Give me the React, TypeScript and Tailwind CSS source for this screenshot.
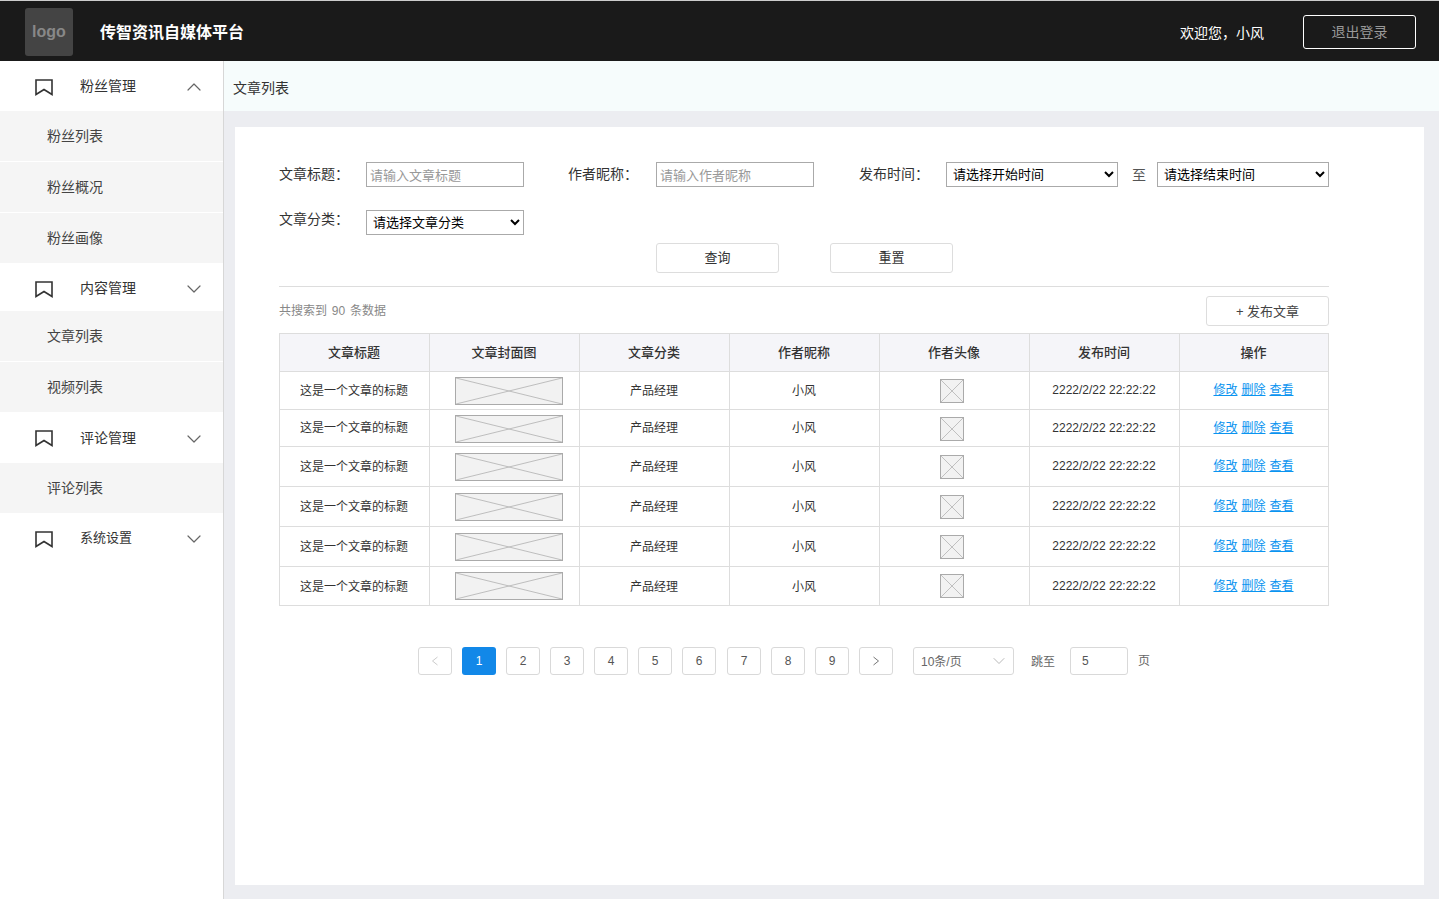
import React from 'react';
import { ChevronDown, ChevronUp } from 'lucide-react';

const FONT = 'font-["Liberation_Sans","Noto_Sans_CJK_SC",sans-serif]';

const menu = [
  { name: '粉丝管理', height: 'h-[50px] pt-[2px]', open: true, small: false, children: [
    { name: '粉丝列表', height: 'h-[50px]' },
    { name: '粉丝概况', height: 'h-[50px]' },
    { name: '粉丝画像', height: 'h-[50px]' },
  ] },
  { name: '内容管理', height: 'h-[48px] pt-[4px]', open: false, small: false, children: [
    { name: '文章列表', height: 'h-[50px]' },
    { name: '视频列表', height: 'h-[50px]' },
  ] },
  { name: '评论管理', height: 'h-[51px] pt-[2px]', open: false, small: false, children: [
    { name: '评论列表', height: 'h-[50px]' },
  ] },
  { name: '系统设置', height: 'h-[50px] pt-[2px]', open: false, small: true, children: [] },
];

const columns = ['文章标题', '文章封面图', '文章分类', '作者昵称', '作者头像', '发布时间', '操作'];
const rows = [
  { height: 'h-[38px]', nudge: 'pb-[2px]', image: '', title: '' },
  { height: 'h-[37px]', nudge: '', image: 'pt-[2px]', title: '' },
  { height: 'h-[40px]', nudge: 'pb-[2px]', image: '', title: '' },
  { height: 'h-[40px]', nudge: 'pb-[2px]', image: '', title: '' },
  { height: 'h-[40px]', nudge: 'pb-[2px]', image: '', title: '' },
  { height: 'h-[39px]', nudge: '', image: '', title: 'pt-[2px]' },
];
const pages = [
  { label: '2', cls: 'ml-[10px]' },
  { label: '3', cls: 'ml-[10px]' },
  { label: '4', cls: 'ml-[10px]' },
  { label: '5', cls: 'ml-[10px]' },
  { label: '6', cls: 'ml-[10px]' },
  { label: '7', cls: 'ml-[11px]' },
  { label: '8', cls: 'ml-[10px]' },
  { label: '9', cls: 'ml-[10px]' },
];

function BookmarkIcon() {
  return (
    <svg width="18" height="17" viewBox="0 0 18 17" fill="none" stroke="#333" strokeWidth="1.6">
      <path d="M1 1 H17 V15.5 L9 10.5 L1 15.5 Z" />
    </svg>
  );
}

function PageArrow({ d, color }: { d: string; color: string }) {
  return (
    <svg width="8" height="10" viewBox="0 0 8 10" fill="none" stroke={color} strokeWidth="1">
      <path d={d} />
    </svg>
  );
}

function Placeholder({ width, height }: { width: number; height: number }) {
  return (
    <svg width={width} height={height} className="block bg-[#f2f2f2] border border-[#aaa]" preserveAspectRatio="none" viewBox={`0 0 ${width} ${height}`}>
      <path d={`M0 0 L${width} ${height} M${width} 0 L0 ${height}`} stroke="#bbb" strokeWidth="1" fill="none" />
    </svg>
  );
}

function Sidebar() {
  return (
    <aside className="w-[224px] shrink-0 bg-white border-r border-[#d7d7d7]">
      {menu.map((group) => (
        <div key={group.name}>
          <div className={`${group.height} flex items-center`}>
            <div className="ml-[35px] w-[45px]"><BookmarkIcon /></div>
            <span className={`${group.small ? 'text-[13px]' : 'text-sm'} flex-1 text-[#333] -mt-[2px]`}>{group.name}</span>
            {group.open
              ? <ChevronUp className="mr-[17px] text-[#666]" size={24} strokeWidth={1.2} />
              : <ChevronDown className="mr-[17px] text-[#666]" size={24} strokeWidth={1.2} />}
          </div>
          {group.children.map((child) => (
            <div key={child.name} className={`${child.height} flex items-center pl-[47px] text-sm text-[#444] bg-[#f5f5f5] [&:not(:last-child)]:border-b [&:not(:last-child)]:border-white [&:not(:last-child)]:h-[51px]`}>
              {child.name}
            </div>
          ))}
        </div>
      ))}
    </aside>
  );
}

function Filters() {
  const label = 'w-[87px] text-sm text-[#333] -mt-[2px]';
  const field = 'border border-[#aaa] bg-white h-[25px] text-[13px]';
  return (
    <div className="text-[#333]">
      <div className="flex items-center h-[25px]">
        <span className={label}>文章标题：</span>
        <input className={`${field} w-[158px] px-[3px] pt-[2px] placeholder-[#999]`} placeholder="请输入文章标题" />
        <span className={`${label} ml-[44px] w-[88px]`}>作者昵称：</span>
        <input className={`${field} w-[158px] px-[3px] pt-[2px] placeholder-[#999]`} placeholder="请输入作者昵称" />
        <span className={`${label} ml-[45px]`}>发布时间：</span>
        <select className={`${field} w-[172px] px-[2px] text-black`} defaultValue="a">
          <option value="a">请选择开始时间</option>
        </select>
        <span className="ml-[14px] w-[25px] text-sm text-[#555]">至</span>
        <select className={`${field} w-[172px] px-[2px] text-black`} defaultValue="b">
          <option value="b">请选择结束时间</option>
        </select>
      </div>
      <div className="flex items-center h-[25px] mt-[23px]">
        <span className="w-[87px] text-sm text-[#333] -mt-[8px]">文章分类：</span>
        <select className={`${field} w-[158px] px-[2px] text-black`} defaultValue="c">
          <option value="c">请选择文章分类</option>
        </select>
      </div>
      <div className="flex mt-[8px] pl-[377px]">
        <button className="w-[123px] h-[30px] border border-[#ddd] rounded-[3px] text-[13px] text-[#333] bg-white">查询</button>
        <button className="ml-[51px] w-[123px] h-[30px] border border-[#ddd] rounded-[3px] text-[13px] text-[#333] bg-white">重置</button>
      </div>
    </div>
  );
}

function ArticleTable() {
  const cell = 'border border-[#ddd] text-center p-0';
  const text = `${cell} pr-[1px]`;
  const media = `${cell} pr-[2px]`;
  return (
    <table className="w-[1050px] table-fixed border-collapse">
      <colgroup>
        <col className="w-[150px]" />
        <col className="w-[150px]" />
        <col className="w-[150px]" />
        <col className="w-[150px]" />
        <col className="w-[150px]" />
        <col className="w-[150px]" />
        <col />
      </colgroup>
      <thead>
        <tr className="h-[38px] bg-[#f5f5f9]">
          {columns.map((c) => (
            <th key={c} className={`${text} text-[13px] font-medium text-[#333]`}>{c}</th>
          ))}
        </tr>
      </thead>
      <tbody className="text-xs text-[#333]">
        {rows.map((row, i) => (
          <tr key={i} className={row.height}>
            <td className={`${text} ${row.title}`}>这是一个文章的标题</td>
            <td className={`${media} ${row.image}`}>
              <div className="flex justify-center pl-[10px]"><Placeholder width={108} height={28} /></div>
            </td>
            <td className={`${text} ${row.title}`}>产品经理</td>
            <td className={`${text} ${row.title}`}>小风</td>
            <td className={`${media} ${row.image}`}>
              <div className="flex justify-center pr-[4px]"><Placeholder width={24} height={24} /></div>
            </td>
            <td className={`${text} ${row.nudge}`}>2222/2/22 22:22:22</td>
            <td className={`${text} ${row.nudge}`}>
              <span className="text-[#0a94f0] underline">修改</span>
              <span className="text-[#0a94f0] underline ml-[4px]">删除</span>
              <span className="text-[#0a94f0] underline ml-[4px]">查看</span>
            </td>
          </tr>
        ))}
      </tbody>
    </table>
  );
}

function Pagination() {
  const box = 'w-[34px] h-[28px] border border-[#d9d9d9] rounded-[3px] bg-white flex items-center justify-center text-xs text-[#555]';
  return (
    <div className="flex items-center mt-[41px] pl-[139px] h-[28px]">
      <div className={box}><PageArrow d="M6.5 1 L1.5 5 L6.5 9" color="#ccc" /></div>
      <div className="w-[34px] h-[28px] ml-[10px] rounded-[3px] bg-[#1288e8] flex items-center justify-center text-xs text-white">1</div>
      {pages.map((p) => (
        <div key={p.label} className={`${box} ${p.cls}`}>{p.label}</div>
      ))}
      <div className={`${box} ml-[10px]`}><PageArrow d="M1.5 1 L6.5 5 L1.5 9" color="#777" /></div>
      <div className="ml-[20px] w-[101px] h-[28px] border border-[#d9d9d9] rounded-[3px] flex items-center justify-between pl-[7px] pr-[4px] text-xs text-[#666]">
        <span className="mt-[2px]">10条/页</span>
        <ChevronDown size={20} className="text-[#aaa]" strokeWidth={1} />
      </div>
      <span className="ml-[17px] mt-[2px] text-xs text-[#666]">跳至</span>
      <div className="ml-[15px] w-[58px] h-[28px] border border-[#d9d9d9] rounded-[3px] flex items-center pl-[11px] text-xs text-[#555]">5</div>
      <span className="ml-[10px] text-xs text-[#666]">页</span>
    </div>
  );
}

export default function App() {
  return (
    <div className={`${FONT} h-[899px] w-[1439px] flex flex-col overflow-hidden`}>
      <header className="h-[61px] shrink-0 bg-[#1a1a1a] border-t border-[#ccc] pt-[2px] flex items-center">
        <div className="ml-[25px] w-[48px] h-[48px] rounded-[3px] bg-[#444] flex items-center justify-center text-base font-bold text-[#888]">logo</div>
        <h1 className="ml-[27px] mt-[2px] text-base font-bold text-white">传智资讯自媒体平台</h1>
        <span className="ml-auto text-sm text-white mt-[2px]">欢迎您，小风</span>
        <button className="ml-[39px] mr-[23px] w-[113px] h-[34px] border border-white rounded-[3px] text-sm text-[#999]">退出登录</button>
      </header>
      <div className="flex flex-1 min-h-0">
        <Sidebar />
        <main className="flex-1 flex flex-col bg-[#ecedf1] min-w-0">
          <div className="h-[50px] shrink-0 bg-[#f6fcfc] flex items-center pl-[9px] pt-[4px] text-sm text-[#333]">文章列表</div>
          <div className="mt-[16px] ml-[11px] mr-[15px] h-[758px] bg-white pt-[35px] pl-[44px] pr-[95px]">
            <Filters />
            <div className="mt-[13px] border-t border-[#ddd]" />
            <div className="flex items-center justify-between mt-[9px] h-[30px]">
              <span className="text-xs text-[#888] [word-spacing:1.5px]">共搜索到 90 条数据</span>
              <button className="w-[123px] h-[30px] pt-[2px] border border-[#ddd] rounded-[3px] text-[13px] text-[#444]">+ 发布文章</button>
            </div>
            <div className="mt-[7px]"><ArticleTable /></div>
            <Pagination />
          </div>
        </main>
      </div>
    </div>
  );
}
